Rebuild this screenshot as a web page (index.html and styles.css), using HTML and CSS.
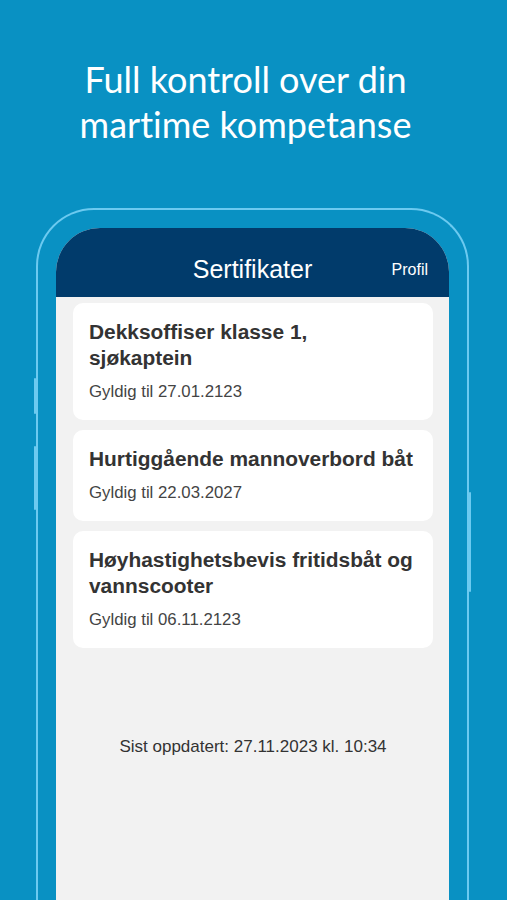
FILE: index.html
```html
<!DOCTYPE html>
<html lang="no">
<head>
<meta charset="utf-8">
<title>Sertifikater</title>
<link rel="stylesheet" href="styles.css">
</head>
<body>
<h1 class="hero">Full kontroll over din<br>martime kompetanse</h1>
<div class="phone">
  <span class="btn btn-l1"></span>
  <span class="btn btn-l2"></span>
  <span class="btn btn-r1"></span>
  <div class="screen">
    <header class="bar">
      <span class="bar-title">Sertifikater</span>
      <span class="bar-link">Profil</span>
    </header>
    <main class="list">
      <div class="card">
        <div class="card-title">Dekksoffiser klasse 1,<br>sjøkaptein</div>
        <div class="card-sub">Gyldig til 27.01.2123</div>
      </div>
      <div class="card">
        <div class="card-title">Hurtiggående mannoverbord båt</div>
        <div class="card-sub">Gyldig til 22.03.2027</div>
      </div>
      <div class="card">
        <div class="card-title">Høyhastighetsbevis fritidsbåt og vannscooter</div>
        <div class="card-sub">Gyldig til 06.11.2123</div>
      </div>
      <p class="updated">Sist oppdatert: 27.11.2023 kl. 10:34</p>
    </main>
  </div>
</div>
</body>
</html>
```

FILE: styles.css
```css
html, body {
  margin: 0;
  padding: 0;
}
body {
  background: #0991c3;
  height: 900px;
  overflow: hidden;
  font-family: "Liberation Sans", Arial, sans-serif;
}
.hero {
  margin: 0;
  padding-top: 57px;
  height: 90px;
  text-align: center;
  font-family: Lato, "Open Sans", sans-serif;
  font-variant-ligatures: none;
  font-weight: 400;
  font-size: 36px;
  line-height: 45px;
  color: #ffffff;
  padding-left: 0;
  padding-right: 16px;
}
.phone {
  position: relative;
  margin: 61px 38px 0 36px;
  border: 2px solid #6ccaf0;
  border-bottom: none;
  border-radius: 58px 58px 0 0;
  padding: 18px 18px 0 18px;
  height: 700px;
}
.btn {
  position: absolute;
  width: 2px;
  background: #6ccaf0;
  border-radius: 1px;
}
.btn-l1 { left: -4px; top: 168px; height: 36px; }
.btn-l2 { left: -4px; top: 236px; height: 64px; }
.btn-r1 { right: -4px; top: 282px; height: 100px; }
.screen {
  background: #f2f2f2;
  border-radius: 44px 44px 0 0;
  overflow: hidden;
  height: 100%;
}
.bar {
  position: relative;
  height: 69px;
  background: #013b6b;
  display: flex;
  align-items: flex-end;
  justify-content: center;
  color: #ffffff;
  box-sizing: border-box;
  padding-bottom: 14px;
}
.bar-title {
  font-size: 25px;
  line-height: 28px;
}
.bar-link {
  position: absolute;
  right: 21px;
  bottom: 17px;
  font-size: 16px;
  line-height: 20px;
}
.list {
  padding: 6px 16px 0 17px;
  display: flex;
  flex-direction: column;
  gap: 10px;
}
.card {
  background: #ffffff;
  border-radius: 10px;
  padding: 16px 16px 18px 16px;
}
.card-title {
  font-weight: 700;
  font-size: 20.9px;
  line-height: 26px;
  color: #333333;
}
.card-sub {
  margin-top: 11px;
  font-size: 16.8px;
  line-height: 20px;
  color: #444444;
}
.updated {
  margin: 79px 0 0 0;
  text-align: center;
  font-size: 17px;
  line-height: 20px;
  color: #333333;
}
```
